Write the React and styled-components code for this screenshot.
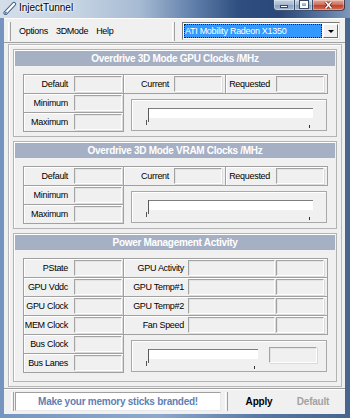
import React from 'react'
import styled, { createGlobalStyle } from 'styled-components'

const GlobalStyle = createGlobalStyle`
  html, body { margin: 0; padding: 0; }
  body {
    background: #4c6c98;
    font-family: "Liberation Sans", Arial, sans-serif;
  }
  * { box-sizing: border-box; }
`

const Window = styled.div`
  width: 350px;
  height: 418px;
  display: flex;
  flex-direction: column;
  overflow: hidden;
  background: linear-gradient(90deg, #7595c0 0%, #8ea8cc 45%, #5777a4 75%, #46668f 100%);
`

const TitleBar = styled.div`
  flex: 0 0 18px;
  display: flex;
  align-items: flex-start;
  background: linear-gradient(90deg, #d3dee9 0%, #c5d3e3 22%, #a6bad3 40%, #5d7ca8 56%, #2f4f80 68%, #2a4879 80%, #55749f 92%, #7d98bb 100%);
`

const TitleIcon = styled.svg`
  flex: 0 0 14px;
  margin: 1px 2px 0 3px;
`

const TitleText = styled.span`
  font-size: 10px;
  line-height: 16px;
  color: #000;
  text-shadow: 0 0 3px #fff, 0 0 5px #fff, 0 0 2px #fff;
`

const Captions = styled.div`
  margin-left: auto;
  margin-right: 5px;
  display: flex;
`

const CaptionBtn = styled.div`
  width: ${p => p.$w}px;
  height: 11px;
  display: flex;
  align-items: center;
  justify-content: center;
  border: 1px solid rgba(25, 40, 70, 0.75);
  border-top: none;
  border-left-width: ${p => (p.$first ? 1 : 0)}px;
  border-radius: ${p => (p.$first ? '0 0 0 4px' : p.$close ? '0 0 4px 0' : '0')};
  background: ${p =>
    p.$close
      ? 'linear-gradient(180deg, #e3a899 0%, #d2705e 45%, #c1432d 55%, #d0705a 100%)'
      : 'linear-gradient(180deg, #c4d2e3 0%, #a7bad2 45%, #8ca3c2 55%, #a3b8d2 100%)'};
  box-shadow: inset 0 0 0 1px rgba(255, 255, 255, 0.35);
`

const MinGlyph = styled.span`
  width: 8px;
  height: 3px;
  margin-top: 3px;
  background: #fff;
  border: 1px solid #3a4a66;
`

const MaxGlyph = styled.span`
  width: 8px;
  height: 7px;
  margin-top: -1px;
  border: 2px solid #fff;
  border-top-width: 2px;
  outline: 1px solid #3a4a66;
`

const Frame = styled.div`
  flex: 1;
  display: flex;
  padding: 0 5px 4px 4px;
`

const Client = styled.div`
  flex: 1;
  display: flex;
  flex-direction: column;
  background: #f0f0f0;
`

const MenuBar = styled.div`
  flex: 0 0 25px;
  display: flex;
  align-items: center;
  padding: 1px 0 0 4px;
  border-top: 1px solid #fff;
  border-bottom: 1px solid #a0a0a0;
`

const Grip = styled.span`
  width: 3px;
  height: ${p => p.$h || 19}px;
  border-left: 1px solid #fff;
  border-right: 1px solid #a0a0a0;
  margin-left: ${p => p.$ml || 0}px;
`

const MenuItems = styled.div`
  width: 161px;
  display: flex;
  padding-left: 4px;
`

const MenuItem = styled.span`
  padding: 0 4px;
  font-size: 9px;
  letter-spacing: -0.3px;
  color: #000;
`

const Combo = styled.div`
  margin-left: 7px;
  width: 158px;
  height: 18px;
  display: flex;
  padding: 1px;
  background: #fff;
  border: 1px solid #7a7a7a;
  border-right-color: #e3e3e3;
  border-bottom-color: #e3e3e3;
`

const ComboValue = styled.div`
  flex: 1;
  background: #3399ff;
  color: #fff;
  font-size: 9px;
  letter-spacing: -0.3px;
  line-height: 14px;
  padding-left: 1px;
  outline: 1px dotted #1a1a1a;
  outline-offset: -1px;
  white-space: nowrap;
`

const ComboButton = styled.div`
  width: 15px;
  margin-left: 1px;
  display: flex;
  align-items: center;
  justify-content: center;
  background: #f0f0f0;
  border: 1px solid;
  border-color: #fff #6b6b6b #6b6b6b #fff;
`

const Arrow = styled.span`
  width: 0;
  height: 0;
  border-left: 3px solid transparent;
  border-right: 3px solid transparent;
  border-top: 3px solid #000;
`

const Panel = styled.div`
  margin: 1px 3px 0 4px;
  padding: 4px;
  border: 1px solid #b8b8b8;
  box-shadow: inset 1px 1px 0 #fff;
  display: flex;
  flex-direction: column;
  gap: 4px;
`

const Group = styled.section`
  padding: 1px;
  border: 1px solid #b3b3b3;
  box-shadow: inset 1px 1px 0 #fff;
`

const GroupHeader = styled.div`
  height: 15px;
  background: #a6b0c5;
  color: #fff;
  font-weight: bold;
  font-size: 10px;
  letter-spacing: -0.3px;
  line-height: 15px;
  text-align: center;
`

const Grid = styled.div`
  display: grid;
  grid-template-columns: ${p => p.$cols};
  grid-auto-rows: 19px;
  margin: 8px 0 ${p => p.$mb}px 8px;
`

const Cell = styled.div`
  display: flex;
  align-items: center;
  margin: 0 -1px -1px 0;
  border: 1px solid #a0a0a0;
  box-shadow: inset 1px 1px 0 #fff;
`

const Label = styled.span`
  flex: 0 0 ${p => p.$w || 50}px;
  padding-right: ${p => p.$pr ?? 6}px;
  text-align: right;
  font-size: 9px;
  letter-spacing: -0.3px;
  color: #000;
  white-space: nowrap;
`

const Field = styled.div`
  flex: 0 0 ${p => p.$w || 48}px;
  height: 16px;
  margin-left: ${p => p.$ml || 0}px;
  margin-top: ${p => p.$mt || 0}px;
  background: #f0f0f0;
  border: 1px solid;
  border-color: #a3a3a3 #fff #fff #a3a3a3;
  box-shadow: 1px 1px 0 #dadada, inset 1px 1px 0 #e4e4e4;
`

const SliderBox = styled.div`
  grid-column: ${p => p.$col};
  grid-row: ${p => p.$row};
  margin: ${p => p.$mt}px 0 0 8px;
  padding: ${p => p.$pt}px 0 0 16px;
  display: flex;
  align-items: flex-start;
  border: 1px solid #a8a8a8;
  box-shadow: inset 1px 1px 0 #fff;
`

const Track = styled.div`
  position: relative;
  flex: 0 0 ${p => p.$w}px;
  height: 10px;
  margin-top: ${p => p.$mt || 0}px;
  background: #fff;
  border-top: 1px solid #7d7d7d;
`

const Thumb = styled.span`
  position: absolute;
  left: 0;
  top: -1px;
  width: 1px;
  height: 14px;
  background: #5a5a5a;
  &::after {
    content: '';
    position: absolute;
    left: -2px;
    top: 12px;
    width: 1px;
    height: 5px;
    background: #555;
  }
`

const Tick = styled.span`
  position: absolute;
  right: 3px;
  top: 16px;
  width: 1px;
  height: 3px;
  background: #333;
`

const StatusBar = styled.div`
  flex: 1;
  margin-top: 1px;
  display: flex;
  align-items: center;
  padding-left: 7px;
  border-top: 1px solid #a0a0a0;
  box-shadow: inset 0 1px 0 #fff;
`

const MessageBox = styled.div`
  width: 206px;
  height: 19px;
  margin-left: 1px;
  background: #fff;
  border: 1px solid;
  border-color: #a0a0a0 #e8e8e8 #e8e8e8 #a0a0a0;
  color: #5f80b3;
  font-weight: bold;
  font-size: 10px;
  letter-spacing: -0.25px;
  line-height: 17px;
  text-align: center;
`

const Action = styled.span`
  width: 54px;
  margin-left: ${p => p.$ml || 0}px;
  text-align: center;
  font-weight: bold;
  font-size: 10px;
  letter-spacing: -0.2px;
  color: ${p => (p.$disabled ? '#a3a3a3' : '#000')};
`

const LabeledCell = ({ label, w, pr }) => (
  <Cell>
    <Label $w={w} $pr={pr}>{label}</Label>
    <Field />
  </Cell>
)

const ClockGroup = ({ title }) => (
  <Group>
    <GroupHeader>{title}</GroupHeader>
    <Grid $cols="100px 102px 102px" $mb={4}>
      <LabeledCell label="Default" />
      <LabeledCell label="Current" pr={5} />
      <LabeledCell label="Requested" />
      <LabeledCell label="Minimum" />
      <SliderBox $col="2 / 4" $row="2 / 4" $mt={6} $pt={8}>
        <Track $w={165}>
          <Thumb />
          <Tick />
        </Track>
      </SliderBox>
      <LabeledCell label="Maximum" />
    </Grid>
  </Group>
)

const powerLeft = ['PState', 'GPU Vddc', 'GPU Clock', 'MEM Clock']
const powerRight = ['GPU Activity', 'GPU Temp#1', 'GPU Temp#2', 'Fan Speed']

const PowerGroup = () => (
  <Group>
    <GroupHeader>Power Management Activity</GroupHeader>
    <Grid $cols="100px 204px" $mb={8}>
      {powerLeft.map((l, i) => (
        <React.Fragment key={l}>
          <LabeledCell label={l} />
          <Cell>
            <Label $w={64} $pr={4}>{powerRight[i]}</Label>
            <Field $w={87} />
            <Field $w={48} $ml={1} />
          </Cell>
        </React.Fragment>
      ))}
      <LabeledCell label="Bus Clock" />
      <SliderBox $col="2" $row="5 / 7" $mt={6} $pt={6}>
        <Track $w={110} $mt={2}>
          <Thumb />
          <Tick />
        </Track>
        <Field $w={48} $ml={11} />
      </SliderBox>
      <LabeledCell label="Bus Lanes" />
    </Grid>
  </Group>
)

const App = () => {
  return (
    <Window>
      <GlobalStyle />
      <TitleBar>
        <TitleIcon width="14" height="14" viewBox="0 0 14 14">
          <path d="M2.5 12 L11 3" stroke="#3f628f" strokeWidth="4.2" strokeLinecap="round" />
          <path d="M2.5 12 L11 3" stroke="#fff" strokeWidth="2.4" strokeLinecap="round" />
          <path d="M2 12.5 L3.5 11" stroke="#3f628f" strokeWidth="1.2" />
        </TitleIcon>
        <TitleText>InjectTunnel</TitleText>
        <Captions>
          <CaptionBtn $w={22} $first>
            <MinGlyph />
          </CaptionBtn>
          <CaptionBtn $w={18}>
            <MaxGlyph />
          </CaptionBtn>
          <CaptionBtn $w={32} $close>
            <svg width="9" height="8" viewBox="0 0 9 8">
              <path d="M1.5 0.5 L7.5 7.5 M7.5 0.5 L1.5 7.5" stroke="#5a1a10" strokeWidth="2.8" />
              <path d="M1.5 0.5 L7.5 7.5 M7.5 0.5 L1.5 7.5" stroke="#fff" strokeWidth="1.6" />
            </svg>
          </CaptionBtn>
        </Captions>
      </TitleBar>
      <Frame>
        <Client>
          <MenuBar>
            <Grip />
            <MenuItems>
              <MenuItem>Options</MenuItem>
              <MenuItem>3DMode</MenuItem>
              <MenuItem>Help</MenuItem>
            </MenuItems>
            <Grip />
            <Combo>
              <ComboValue>ATI Mobility Radeon X1350</ComboValue>
              <ComboButton>
                <Arrow />
              </ComboButton>
            </Combo>
          </MenuBar>
          <Panel>
            <ClockGroup title="Overdrive 3D Mode GPU Clocks /MHz" />
            <ClockGroup title="Overdrive 3D Mode VRAM Clocks /MHz" />
            <PowerGroup />
          </Panel>
          <StatusBar>
            <Grip $h={19} />
            <MessageBox>Make your memory sticks branded!</MessageBox>
            <Grip $h={19} $ml={4} />
            <Action $ml={4}>Apply</Action>
            <Action $disabled>Default</Action>
          </StatusBar>
        </Client>
      </Frame>
    </Window>
  )
}

export default App
